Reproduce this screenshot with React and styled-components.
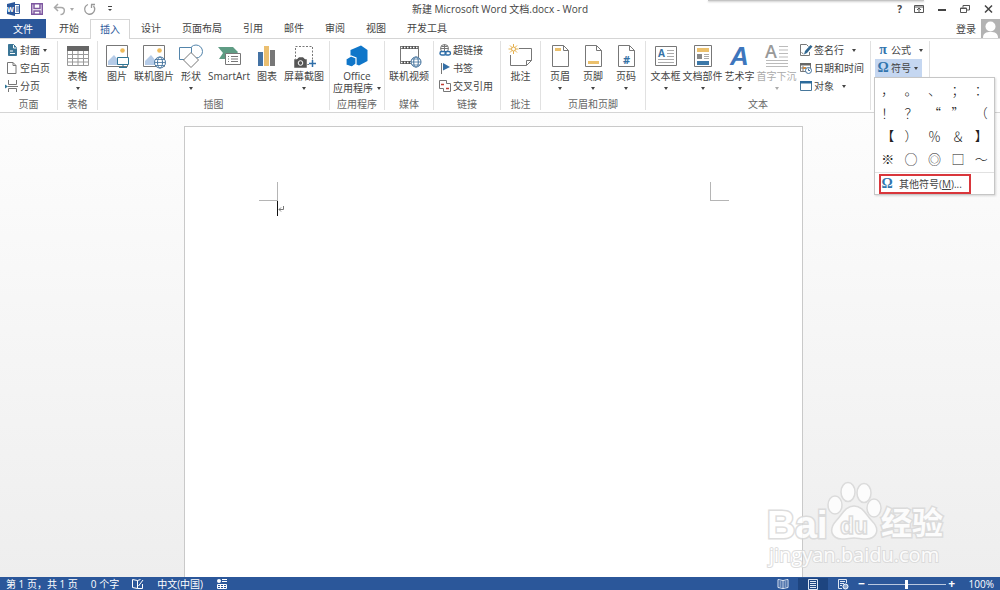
import React from "react";
import styled, { createGlobalStyle } from "styled-components";

const GlobalStyle = createGlobalStyle`
  * {
    box-sizing: border-box;
  }
  body {
    margin: 0;
    background: #fff;
    color: #444;
    font: 10px/12px "Open Sans", "Noto Sans CJK SC", sans-serif;
  }
  button {
    border: none;
    padding: 0;
    margin: 0;
    background: transparent;
    color: inherit;
    font: inherit;
    white-space: nowrap;
  }
  svg {
    display: block;
    flex: none;
    overflow: visible;
  }
`;

const Window = styled.div`
  position: relative;
  display: flex;
  flex-direction: column;
  height: 100vh;
  overflow: hidden;
`;

const TopShadow = styled.div`
  position: absolute;
  top: 0;
  right: 76px;
  width: 216px;
  height: 1px;
  background: #c4c4c4;
  box-shadow: 0 1px 2px #bbb;
`;

const TitleBar = styled.header`
  display: grid;
  grid-template-columns: 1fr auto 1fr;
  align-items: center;
  height: 18px;
`;

const QuickAccess = styled.div`
  display: flex;
  align-items: center;
  gap: 10px;
  padding-left: 7px;
`;

const QuickButton = styled.button`
  display: flex;
  align-items: center;
  gap: 4px;
  margin-right: ${(p) => p.$after || 0}px;
  color: #aaa;
`;

const Title = styled.h1`
  margin: 0;
  font-size: 10px;
  font-weight: 400;
`;

const WindowButtons = styled.div`
  display: flex;
  justify-content: flex-end;
  gap: 11px;
  padding-right: 6px;
`;

const TabRow = styled.nav`
  display: flex;
  gap: 1px;
  height: 21px;
  padding-top: 1px;
  border-bottom: 1px solid #d5d5d5;
`;

const FileTab = styled.button`
  width: 46px;
  margin-right: 2px;
  background: #2b579a;
  color: #fff;
`;

const Tab = styled.button`
  padding: 0 10px 1px;
  ${(p) =>
    p.$active &&
    `
    height: 20px;
    padding: 0 9px 2px;
    border: 1px solid #d5d5d5;
    border-bottom: none;
    background: #fff;
    color: #2b579a;
  `}
`;

const Account = styled.div`
  display: flex;
  align-items: center;
  gap: 5px;
  margin-left: auto;
`;

const RibbonBar = styled.div`
  display: flex;
  height: 74px;
  padding: 2px 0;
  border-bottom: 1px solid #d5d5d5;
  background: #fff;
`;

const GroupBox = styled.section`
  display: flex;
  flex: 0 0 ${(p) => p.$width}px;
  flex-direction: column;
  border-right: 1px solid #e1e1e1;
`;

const GroupBody = styled.div`
  display: flex;
  flex: 1;
  justify-content: ${(p) => (p.$start ? "flex-start" : "center")};
  padding-left: ${(p) => p.$pad || 0}px;
`;

const GroupLabel = styled.div`
  height: 12px;
  color: #666;
  text-align: center;
`;

const BigButton = styled.button`
  display: flex;
  flex: 0 0 ${(p) => p.$width || 38}px;
  flex-direction: column;
  align-items: center;
  gap: 2px;
  width: ${(p) => p.$width || 38}px;
  padding-top: 3px;
  color: ${(p) => (p.disabled ? "#aaa" : "inherit")};
`;

const Caret = styled.i`
  display: inline-block;
  flex: none;
  width: 4px;
  border: 2px solid transparent;
  border-top: 3px solid currentColor;
  border-bottom: none;
  ${(p) => p.$below && "margin-top: 3px;"}
  ${(p) => p.$inline && "margin: 0 0 2px 4px;"}
`;

const Stack = styled.div`
  position: relative;
  display: flex;
  flex-direction: column;
  align-items: flex-start;
  padding-left: ${(p) => p.$indent || 0}px;
`;

const SmallButton = styled.button`
  display: flex;
  align-items: center;
  gap: 2px;
  height: 18px;
  padding: 0 4px 0 2px;
  background: ${(p) => (p.$pressed ? "#c5d7f1" : "transparent")};

  ${Caret} {
    margin-left: ${(p) => p.$caretGap || 1}px;
  }
`;

const SymbolMenu = styled.div`
  position: absolute;
  z-index: 2;
  top: 36px;
  left: -1px;
  width: 121px;
  border: 1px solid #c6c6c6;
  background: #fff;
  box-shadow: 1px 1px 2px rgba(0, 0, 0, 0.15);
`;

const SymbolGrid = styled.div`
  display: grid;
  grid-template-columns: repeat(5, 1fr);
  grid-auto-rows: 23px;
  padding: 0 1px 2px;
  border-bottom: 1px solid #e1e1e1;

  button {
    color: #222;
    font: 13px/23px "Noto Sans CJK SC", sans-serif;
    font-weight: 300;
  }
`;

const MoreSymbols = styled.button`
  display: flex;
  align-items: center;
  gap: 6px;
  width: 92px;
  height: 20px;
  margin: 1px 0 0 4px;
  border: 2px solid #d9363b;
`;

const Canvas = styled.main`
  display: flex;
  flex: 1;
  justify-content: center;
  min-height: 0;
  padding: 13px 13px 0 0;
  background: linear-gradient(#fdfdfd, #eee);
`;

const Page = styled.article`
  width: 619px;
  padding: 55px 73px 0 74px;
  border: 1px solid #c9c9c9;
  border-bottom: none;
  background: #fff;
`;

const Margins = styled.div`
  display: flex;
  justify-content: space-between;
`;

const Corner = styled.div`
  width: 19px;
  height: 19px;
  border: 0 solid #b5b5b5;
  border-bottom-width: 1px;
  ${(p) => (p.$right ? "border-left-width: 1px;" : "border-right-width: 1px;")}
`;

const Line = styled.div`
  display: flex;
  align-items: center;
  height: 15px;
  margin-left: 18px;
  border-left: 1px solid #111;
`;

const Watermark = styled.svg`
  position: absolute;
  right: 50px;
  bottom: 18px;
`;

const StatusBar = styled.footer`
  display: flex;
  flex: none;
  align-items: center;
  justify-content: space-between;
  height: 13px;
  padding: 1px 6px 0;
  background: #2b579a;
  color: #fff;
`;

const StatusGroup = styled.div`
  display: flex;
  align-items: center;
  gap: ${(p) => p.$gap || 0}px;
  height: 12px;
`;

const ViewButton = styled.button`
  display: flex;
  align-items: center;
  justify-content: center;
  width: 30px;
  height: 13px;
  background: ${(p) => (p.$active ? "#1e4580" : "transparent")};
`;

const ZoomButton = styled.button`
  width: 8px;
  font-size: 12px;
  font-weight: 700;
`;

const ZoomSlider = styled.input`
  width: 78px;
  height: 10px;
  margin: 0;
  appearance: none;
  background: linear-gradient(#b9c8e0, #b9c8e0) center / 100% 1px no-repeat;

  &::-webkit-slider-thumb {
    width: 3px;
    height: 9px;
    appearance: none;
    background: #fff;
  }
`;

const ZoomValue = styled.span`
  margin-left: 13px;
`;

const Svg = ({ size = 24, children }) => (
  <svg width={size} height={size} viewBox={`0 0 ${size} ${size}`} fill="none" stroke="#777" aria-hidden="true">
    {children}
  </svg>
);

const Globe = ({ x, y, r = 5.5 }) => (
  <g stroke="#41719c" fill="#fff">
    <circle cx={x} cy={y} r={r} />
    <ellipse cx={x} cy={y} rx={r / 2.2} ry={r} />
    <path d={`M${x - r} ${y}h${r * 2}M${x - r + 1} ${y - 3}h${r * 2 - 2}M${x - r + 1} ${y + 3}h${r * 2 - 2}`} strokeWidth=".8" />
  </g>
);

const Photo = () => (
  <>
    <path d="M1.5 1.5h21v21h-21z" fill="#fff" />
    <circle cx="17.5" cy="6.5" r="2.3" fill="#eebb5c" stroke="none" />
    <path d="M3 21v-4l6-6 5 6v4z" fill="#b5cbe7" stroke="none" />
  </>
);

const Sheet = ({ children }) => (
  <Svg>
    <path d="M4.5 1.5h11l5 5v16h-16zM15.5 1.5v5h5" fill="#fff" />
    {children}
  </Svg>
);

const icons = {
  table: (
    <Svg>
      <path d="M1.5 2.5h21v19h-21zM1 10.5h22M1 14.5h22M1 18h22M6.5 7v14M12 7v14M17.5 7v14" stroke="#999" />
      <path d="M1 2h22v5H1z" fill="#666" stroke="none" />
    </Svg>
  ),
  picture: (
    <Svg>
      <Photo />
      <path d="M12.5 13.5h11v7h-11zM18 20.5v3M14 23.5h8" stroke="#2f7595" fill="#fff" />
    </Svg>
  ),
  online: (
    <Svg>
      <Photo />
      <Globe x={18} y={18.5} />
    </Svg>
  ),
  shapes: (
    <Svg>
      <circle cx="17" cy="7.5" r="6.5" stroke="#5485ab" />
      <path d="M.5 3.5h12v12h-12z" stroke="#5485ab" fill="#fff" />
      <path d="M12 8.5l7.5 7.5-7.5 7.5L4.5 16z" fill="#fff" />
    </Svg>
  ),
  smartart: (
    <Svg>
      <path d="M1 3h15l5 5-5 7H2l4-6z" fill="#5f9c84" stroke="none" />
      <path d="M8.5 9.5h15v11h-15zM11 12.5h1M14 12.5h7M11 15h1M14 15h7M11 17.5h1M14 17.5h7" fill="#fff" />
    </Svg>
  ),
  chart: (
    <Svg>
      <path d="M3 8h5v14H3z" fill="#4472a4" stroke="none" />
      <path d="M9 2h5v20H9z" fill="#ebbf70" stroke="none" />
      <path d="M15 6h5v16h-5z" fill="#777" stroke="none" />
    </Svg>
  ),
  screenshot: (
    <Svg>
      <path d="M3.5 2.5h17v18h-17z" strokeDasharray="2 1.5" />
      <path d="M2 15h3l2-2h4l2 2h2v9H2z" fill="#555" stroke="#fff" strokeWidth=".5" />
      <circle cx="8.5" cy="19" r="2.3" stroke="#fff" />
      <path d="M20.5 16v7M17 19.5h7" stroke="#fff" strokeWidth="4" />
      <path d="M20.5 16v7M17 19.5h7" stroke="#2f6ea8" strokeWidth="1.5" />
    </Svg>
  ),
  office: (
    <Svg>
      <path d="M5.5 6L16 1.5 22.5 6v11L14 21.5 5.5 18z" fill="#0f76c9" stroke="none" />
      <path d="M1 15l5-3 5 2v6l-4 3-6-2z" fill="#0f76c9" stroke="#fff" strokeWidth="1.2" />
    </Svg>
  ),
  video: (
    <Svg>
      <path d="M3 3.5h19M3 18.5h19" stroke="#555" strokeWidth="3" />
      <path d="M4 3.5h18M4 18.5h18" stroke="#fff" strokeWidth="1.5" strokeDasharray="1.5 1.5" />
      <path d="M3.5 2v18M21.5 2v18" />
      <Globe x={19} y={18} r={5} />
    </Svg>
  ),
  comment: (
    <Svg>
      <path d="M10 4.5h12.5v12l-5 5h-16V11M22.5 16.5h-5v5" />
      <path d="M4.5 0v10M-.5 5h10M1 1.5l7 7M8 1.5l-7 7" stroke="#e5b04e" />
      <circle cx="4.5" cy="5" r="2" fill="#fff" stroke="#e5b04e" />
    </Svg>
  ),
  header: (
    <Sheet>
      <path d="M7 4h6v3H7z" fill="#ebc06c" stroke="none" />
    </Sheet>
  ),
  footer: (
    <Sheet>
      <path d="M7 17h11v3H7z" fill="#ebc06c" stroke="none" />
    </Sheet>
  ),
  number: (
    <Sheet>
      <text x="9" y="20" fontSize="11" fontWeight="700" fill="#3572a5" stroke="none">#</text>
    </Sheet>
  ),
  textbox: (
    <Svg>
      <path d="M1.5 2.5h21v19h-21z" />
      <path d="M13 6.5h7M13 9.5h7M13 12.5h7M4 15.5h16M4 18.5h16" stroke="#aaa" />
      <text x="4" y="13" fontSize="10" fontWeight="700" fill="#3572a5" stroke="none">A</text>
    </Svg>
  ),
  parts: (
    <Svg>
      <path d="M3.5 1.5h17v21h-17z" />
      <path d="M6 4h12v4H6z" fill="#ebc06c" stroke="none" />
      <path d="M6 10h5v5H6z" fill="#888" stroke="none" />
      <path d="M6 17h12v4H6z" fill="#3c78a8" stroke="none" />
      <path d="M13 10.5h5M13 12.5h5M13 14.5h5" stroke="#aaa" />
    </Svg>
  ),
  wordart: (
    <Svg>
      <text x="2" y="21" fontFamily="Liberation Sans" fontStyle="italic" fontWeight="700" fontSize="26" fill="#3d76bd" stroke="none">A</text>
    </Svg>
  ),
  dropcap: (
    <Svg>
      <text x="0" y="14" fontSize="18" fontWeight="600" fill="#999" stroke="none">A</text>
      <path d="M14 2.5h9M14 6h9M14 9.5h9M14 13h9M1 16.5h22M1 19.5h22M1 22.5h22" stroke="#bbb" />
    </Svg>
  ),
  cover: (
    <Svg size={12}>
      <path d="M2.5 .5h5l3 3v8h-8z" fill="#3a7596" stroke="#3a7596" />
      <path d="M7.5 1v3h3M4 9.5h5M4 7h3" stroke="#fff" />
    </Svg>
  ),
  blank: (
    <Svg size={12}>
      <path d="M1.5 .5h5.5l3 3v8H1.5zM7 .5v3h3" />
    </Svg>
  ),
  pagebreak: (
    <Svg size={12}>
      <path d="M2.5 0v4.5h8V0M2.5 12V8.5h8V12M2 6.5h10" />
      <path d="M-1 4.5l3 2-3 2z" fill="#2f7595" stroke="none" />
    </Svg>
  ),
  link: (
    <Svg size={12}>
      <circle cx="5.5" cy="4.5" r="4" />
      <path d="M1.5 4.5h8M5.5 .5v7M2.5 2.5h6" />
      <rect x="1" y="7.5" width="6" height="3.5" rx="1.7" fill="#fff" stroke="#2f6ea8" strokeWidth="1.4" />
      <rect x="6" y="7.5" width="5.5" height="3.5" rx="1.7" stroke="#2f6ea8" strokeWidth="1.4" />
    </Svg>
  ),
  bookmark: (
    <Svg size={12}>
      <path d="M2.5 1v11" />
      <path d="M4 1l7 4-7 3.5z" fill="#356fa5" stroke="none" />
    </Svg>
  ),
  crossref: (
    <Svg size={12}>
      <path d="M4.5 8.5h-4v-8h7v3M7.5 3.5h4v8h-7v-3" />
      <path d="M2 4.5h3M7 8.5h3" stroke="#c33f35" strokeWidth="1.5" />
    </Svg>
  ),
  signature: (
    <Svg size={12}>
      <path d="M9.5 8v3.5h-9v-11h6l2 2M1.5 8.5l2 1.5" />
      <path d="M4 10.5l1-3.5 5.5-6 2 1.5L7 9z" fill="#2f6690" stroke="none" />
    </Svg>
  ),
  date: (
    <Svg size={12}>
      <path d="M.5 1.5h10v8H.5zM3 4v5M.5 6h6" />
      <path d="M0 1h11v2.5H0z" fill="#666" stroke="none" />
      <path d="M3 5h3v2H3z" fill="#d08a42" stroke="none" />
      <circle cx="8.5" cy="8.5" r="3" fill="#fff" stroke="#41719c" />
      <path d="M8.5 6.5v2h1.5" stroke="#41719c" />
    </Svg>
  ),
  object: (
    <Svg size={12}>
      <path d="M.5 1.5h11v9H.5z" fill="#fff" stroke="#47779b" />
      <path d="M0 1h12v2.5H0z" fill="#2b6a9b" stroke="none" />
    </Svg>
  ),
};

const Glyph = styled.span`
  width: 12px;
  color: #3174ad;
  font: 700 14px/16px "Liberation Serif", serif;
  text-align: center;
`;

const Big = ({ icon, label, caret, width, disabled }) => (
  <BigButton $width={width} disabled={disabled}>
    {icons[icon]}
    <span>{label}</span>
    {caret && <Caret $below />}
  </BigButton>
);

const Small = ({ icon, label, caret, caretGap, ...rest }) => (
  <SmallButton $caretGap={caretGap} {...rest}>
    {icons[icon] || <Glyph>{icon}</Glyph>}
    <span>{label}</span>
    {caret && <Caret />}
  </SmallButton>
);

const Group = ({ label, width, pad, start, children }) => (
  <GroupBox $width={width} aria-label={label}>
    <GroupBody $pad={pad} $start={start}>
      {children}
    </GroupBody>
    <GroupLabel>{label}</GroupLabel>
  </GroupBox>
);

const tabs = ["开始", "插入", "设计", "页面布局", "引用", "邮件", "审阅", "视图", "开发工具"];
const symbols = Array.from("，。、；：！？“”（【）％＆】※○◎□～");

const Ribbon = () => (
  <RibbonBar>
    <Group label="页面" width={58} pad={4} start>
      <Stack>
        <Small icon="cover" label="封面" caret />
        <Small icon="blank" label="空白页" />
        <Small icon="pagebreak" label="分页" />
      </Stack>
    </Group>
    <Group label="表格" width={40}>
      <Big icon="table" label="表格" caret />
    </Group>
    <Group label="插图" width={232} start>
      <Big icon="picture" label="图片" />
      <Big icon="online" label="联机图片" width={36} />
      <Big icon="shapes" label="形状" caret />
      <Big icon="smartart" label="SmartArt" />
      <Big icon="chart" label="图表" />
      <Big icon="screenshot" label="屏幕截图" caret width={36} />
    </Group>
    <Group label="应用程序" width={55}>
      <Big
        icon="office"
        width={54}
        label={
          <>
            Office
            <br />
            应用程序
            <Caret $inline />
          </>
        }
      />
    </Group>
    <Group label="媒体" width={49}>
      <Big icon="video" label="联机视频" />
    </Group>
    <Group label="链接" width={67} pad={3} start>
      <Stack>
        <Small icon="link" label="超链接" />
        <Small icon="bookmark" label="书签" />
        <Small icon="crossref" label="交叉引用" />
      </Stack>
    </Group>
    <Group label="批注" width={40}>
      <Big icon="comment" label="批注" />
    </Group>
    <Group label="页眉和页脚" width={105}>
      <Big icon="header" label="页眉" caret width={33} />
      <Big icon="footer" label="页脚" caret width={33} />
      <Big icon="number" label="页码" caret width={33} />
    </Group>
    <Group label="文本" width={225} pad={1} start>
      <Big icon="textbox" label="文本框" caret width={37} />
      <Big icon="parts" label="文档部件" caret width={37} />
      <Big icon="wordart" label="艺术字" caret width={37} />
      <Big icon="dropcap" label="首字下沉" caret width={37} disabled />
      <Stack $indent={3}>
        <Small icon="signature" label="签名行" caret caretGap={6} />
        <Small icon="date" label="日期和时间" />
        <Small icon="object" label="对象" caret caretGap={6} />
      </Stack>
    </Group>
    <Group label="" width={59} pad={4} start>
      <Stack>
        <Small icon="π" label="公式" caret caretGap={6} />
        <Small icon="Ω" label="符号" caret $pressed aria-expanded="true" />
        <SymbolMenu>
          <SymbolGrid>
            {symbols.map((s) => (
              <button key={s}>{s}</button>
            ))}
          </SymbolGrid>
          <MoreSymbols>
            <Glyph>Ω</Glyph>
            <span>
              其他符号(<u>M</u>)...
            </span>
          </MoreSymbols>
        </SymbolMenu>
      </Stack>
    </Group>
  </RibbonBar>
);

const App = () => (
  <Window>
    <GlobalStyle />
    <TitleBar>
      <QuickAccess>
        <Svg size={14}>
          <path d="M7.5 2.5h5v9h-5M9 5h3M9 7h3M9 9h3" stroke="#2b579a" />
          <path d="M0 2l8-2v14l-8-2z" fill="#2b579a" stroke="none" />
          <text x="0" y="10" fontSize="7" fontWeight="700" fill="#fff" stroke="none">W</text>
        </Svg>
        <QuickButton aria-label="保存">
          <Svg size={12}>
            <path d="M.75 .75h10.5v10.5H.75zM3 1v4.5h6V1M3 11V8h6v3" stroke="#7e57a0" strokeWidth="1.5" />
          </Svg>
        </QuickButton>
        <QuickButton aria-label="撤消">
          <Svg size={13}>
            <path d="M5 1L1.5 4.5 5 8M2 4.5h6c5 0 4 7-.5 7" stroke="#a9a9a9" strokeWidth="1.5" />
          </Svg>
          <Caret />
        </QuickButton>
        <QuickButton aria-label="重复" $after={1}>
          <Svg size={12}>
            <path d="M4 1.5a5 5 0 1 0 5.5 1.5M7 1.5h4M7.5 1.5V5" stroke="#999" strokeWidth="1.3" />
          </Svg>
        </QuickButton>
        <QuickButton aria-label="自定义快速访问工具栏">
          <Svg size={6}>
            <path d="M1 .5h4" stroke="#444" />
            <path d="M1 3h4L3 5z" fill="#444" stroke="none" />
          </Svg>
        </QuickButton>
      </QuickAccess>
      <Title>新建 Microsoft Word 文档.docx - Word</Title>
      <WindowButtons>
        <button aria-label="帮助">
          <b>?</b>
        </button>
        <button aria-label="功能区显示选项">
          <Svg size={12}>
            <path d="M1.5 2.5h9v7h-9zM1 4h10M6 9V5.5M4 7l2-2 2 2" stroke="#555" />
          </Svg>
        </button>
        <button aria-label="最小化">
          <Svg size={12}>
            <path d="M2 7h8" stroke="#444" strokeWidth="2" />
          </Svg>
        </button>
        <button aria-label="还原">
          <Svg size={12}>
            <path d="M1.5 5h6v4.5h-6zM1 5.5h7M4 4.5v-2h6.5V7H8M4 2.5h6.5" stroke="#555" />
          </Svg>
        </button>
        <button aria-label="关闭">
          <Svg size={12}>
            <path d="M3 2.5l7 7M10 2.5l-7 7" stroke="#444" strokeWidth="1.5" />
          </Svg>
        </button>
      </WindowButtons>
    </TitleBar>
    <TopShadow />
    <TabRow>
      <FileTab>文件</FileTab>
      {tabs.map((t) => (
        <Tab key={t} $active={t === "插入"}>
          {t}
        </Tab>
      ))}
      <Account>
        <button>登录</button>
        <Svg size={19}>
          <path d="M0 0h19v19H0z" fill="#b3b3b3" stroke="none" />
          <circle cx="9.5" cy="7.5" r="5" fill="#fff" stroke="none" />
          <path d="M2 19c0-5 3-6 7.5-6s7.5 1 7.5 6z" fill="#fff" stroke="none" />
        </Svg>
      </Account>
    </TabRow>
    <Ribbon />
    <Canvas>
      <Page>
        <Margins>
          <Corner />
          <Corner $right />
        </Margins>
        <Line>
          <Svg size={6}>
            <path d="M5.5 0v3.5H1M3 1.5l-2 2 2 2" stroke="#777" />
          </Svg>
        </Line>
      </Page>
    </Canvas>
    <Watermark width="184" height="92" viewBox="0 0 184 92" fill="#fff" stroke="#d8d8d8" opacity=".85">
      <g fontWeight="700" paintOrder="stroke" strokeWidth="3">
        <text x="1" y="58" fontSize="39" fontFamily="Liberation Sans">Bai</text>
        <text x="115" y="54" fontSize="31" fontFamily="Noto Sans CJK SC">经验</text>
      </g>
      <g strokeWidth="1.5">
        <ellipse cx="69" cy="25" rx="7" ry="9" />
        <ellipse cx="82" cy="12" rx="7" ry="9.5" />
        <ellipse cx="98" cy="13" rx="7" ry="9.5" />
        <ellipse cx="108" cy="28" rx="7" ry="9" />
        <path d="M88 26c9 0 12 9 18 15 9 9 4 18-6 18-5 0-8-1-12-1s-7 1-12 1c-10 0-14-9-6-18 6-6 9-15 18-15z" />
      </g>
      <text x="74" y="54" fontSize="23" fontWeight="700" fontFamily="Liberation Sans" strokeWidth="1.5">du</text>
      <text x="3" y="82" fontSize="20" fontFamily="Open Sans" paintOrder="stroke" strokeWidth="2">jingyan.baidu.com</text>
    </Watermark>
    <StatusBar>
      <StatusGroup $gap={13}>
        <span>第 1 页，共 1 页</span>
        <span>0 个字</span>
        <Svg size={12}>
          <path d="M5.5 2.5l-5-1v8l5 1zM5.5 2.5l3-1M5.5 10.5h5V6M6.5 8l4.5-6" stroke="#fff" />
        </Svg>
        <span>中文(中国)</span>
        <Svg size={12}>
          <circle cx="3" cy="3" r="2" fill="#fff" stroke="none" />
          <path d="M6 1.5h5M6 3.5h5M1.5 6.5h9v4h-9zM1 8.5h10M4.5 6v5M7.5 6v5" stroke="#fff" />
        </Svg>
      </StatusGroup>
      <StatusGroup>
        <ViewButton aria-label="阅读视图">
          <Svg size={12}>
            <path d="M6 2.5l-5-1v8l5 1 5-1v-8zM6 2v9M2.5 4h2M2.5 6h2M2.5 8h2M7.5 4h2M7.5 6h2M7.5 8h2" stroke="#dfe7f3" />
          </Svg>
        </ViewButton>
        <ViewButton $active aria-label="页面视图">
          <Svg size={12}>
            <path d="M1.5 1.5h9v10h-9zM3 3.5h6M3 5.5h6M3 7.5h6M3 9.5h6" stroke="#dfe7f3" />
          </Svg>
        </ViewButton>
        <ViewButton aria-label="Web 版式视图">
          <Svg size={12}>
            <path d="M5 10.5H1.5v-9h8V5M3 3.5h5M3 5.5h4M3 7.5h2" stroke="#dfe7f3" />
            <circle cx="8.5" cy="8.5" r="2.5" fill="#8fa8cf" stroke="#fff" />
          </Svg>
        </ViewButton>
        <StatusGroup $gap={2}>
          <ZoomButton aria-label="缩小">−</ZoomButton>
          <ZoomSlider type="range" min="0" max="200" defaultValue="100" aria-label="显示比例" />
          <ZoomButton aria-label="放大">+</ZoomButton>
        </StatusGroup>
        <ZoomValue>100%</ZoomValue>
      </StatusGroup>
    </StatusBar>
  </Window>
);

export default App;
